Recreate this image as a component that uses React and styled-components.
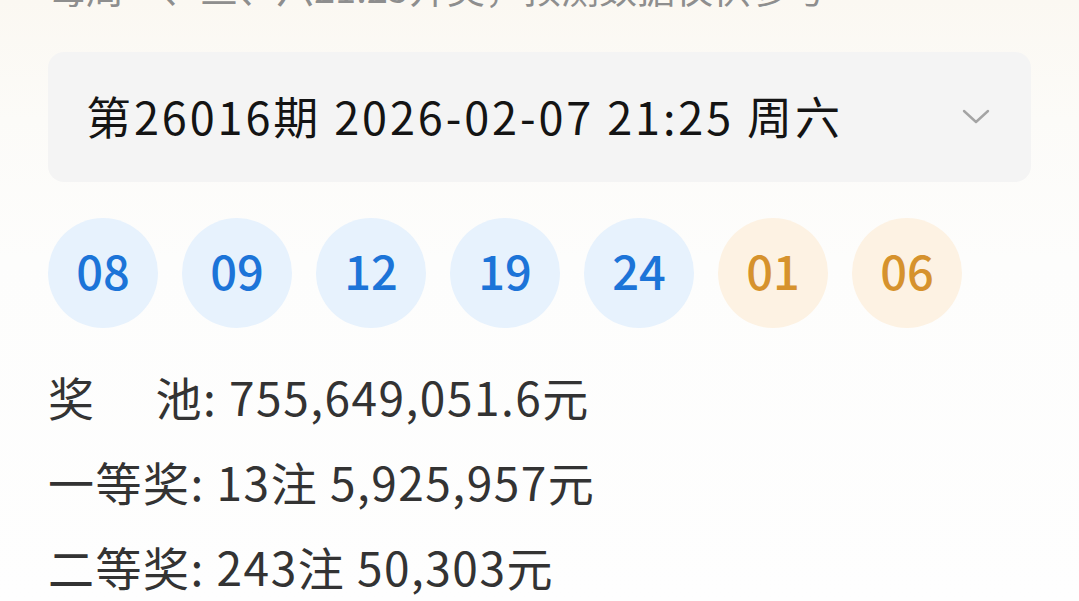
import React from "react";
import styled, { createGlobalStyle } from "styled-components";

const Global = createGlobalStyle`
  html, body { margin: 0; padding: 0; }
  body {
    background: linear-gradient(180deg, #fbf8f2 0px, #fcfbf8 120px, #fdfdfc 260px, #fefefe 601px);
    font-family: "Noto Sans CJK SC", "Noto Sans", sans-serif;
    overflow: hidden;
  }
`;

const Page = styled.div`
  width: 1079px;
  height: 601px;
  box-sizing: border-box;
  padding: 0 48px;
  overflow: hidden;
  display: flex;
  flex-direction: column;
  & > * { flex-shrink: 0; }
`;

const Notice = styled.div`
  margin-top: -34px;
  font-size: 38px;
  line-height: 42px;
  color: #8e8e8e;
  white-space: nowrap;
`;

const Selector = styled.div`
  margin-top: 44px;
  height: 130px;
  border-radius: 16px;
  background: #f4f4f4;
  display: flex;
  align-items: center;
  justify-content: space-between;
  padding: 0 40px 0 38px;
`;

const SelectorText = styled.span`
  font-size: 45px;
  color: #141414;
  letter-spacing: 2.9px;
  padding-bottom: 4px;
`;

const Balls = styled.div`
  margin-top: 36px;
  display: flex;
  gap: 24px;
`;

const Ball = styled.div`
  width: 110px;
  height: 110px;
  box-sizing: border-box;
  padding-bottom: 8px;
  border-radius: 50%;
  display: flex;
  align-items: center;
  justify-content: center;
  font-size: 47px;
  font-weight: 500;
  background: ${(p) => (p.$back ? "#fdf2e3" : "#e7f2fd")};
  color: ${(p) => (p.$back ? "#d6922d" : "#1c74d8")};
`;

const Info = styled.div`
  margin-top: 26px;
  display: flex;
  flex-direction: column;
`;

const Row = styled.div`
  font-size: 46px;
  line-height: 85px;
  color: #333333;
  letter-spacing: 1.5px;
  white-space: nowrap;
`;

const Gap = styled.span`
  display: inline-block;
  width: 60px;
`;

const Chevron = () => (
  <svg width="30" height="18" viewBox="0 0 30 18" fill="none">
    <path d="M3 3 L15 14 L27 3" stroke="#a4a4a4" strokeWidth="2.4" strokeLinecap="round" strokeLinejoin="round" />
  </svg>
);

const front = ["08", "09", "12", "19", "24"];
const back = ["01", "06"];

export default function App() {
  return (
    <>
      <Global />
      <Page>
        <Notice>每周一、三、六21:25开奖，预测数据仅供参考</Notice>
        <Selector>
          <SelectorText>第26016期 2026-02-07 21:25 周六</SelectorText>
          <Chevron />
        </Selector>
        <Balls>
          {front.map((n) => (
            <Ball key={"f" + n}>{n}</Ball>
          ))}
          {back.map((n) => (
            <Ball key={"b" + n} $back>
              {n}
            </Ball>
          ))}
        </Balls>
        <Info>
          <Row>
            奖<Gap />池: 755,649,051.6元
          </Row>
          <Row>一等奖: 13注 5,925,957元</Row>
          <Row>二等奖: 243注 50,303元</Row>
        </Info>
      </Page>
    </>
  );
}
